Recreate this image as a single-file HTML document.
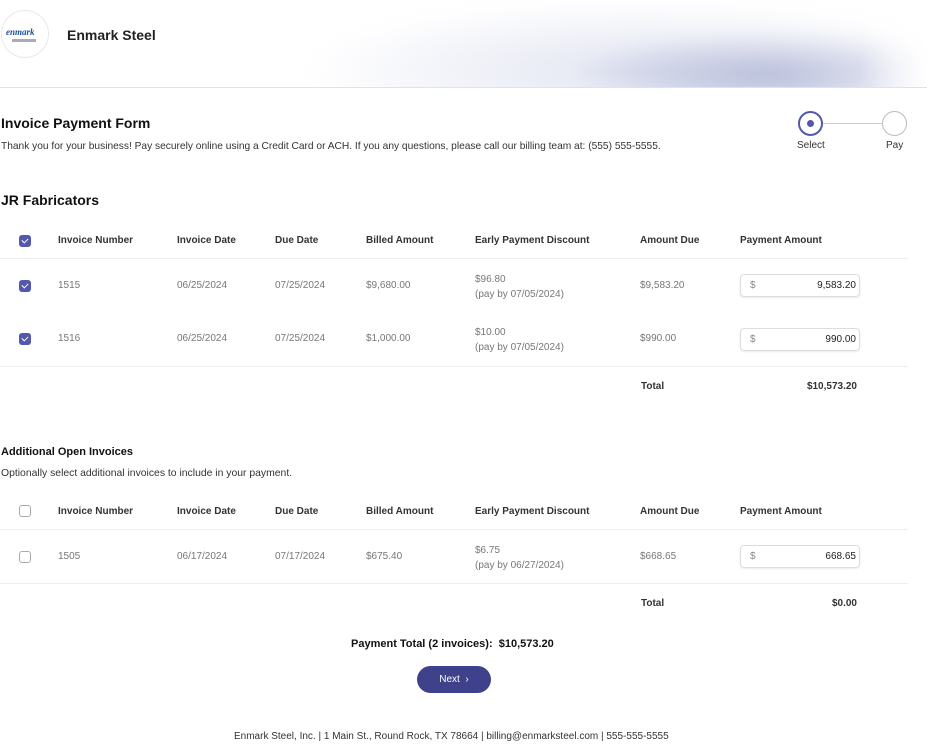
<!DOCTYPE html>
<html><head><meta charset="utf-8"><style>
*{margin:0;padding:0;box-sizing:border-box}
body{width:927px;height:756px;position:relative;background:#fff;font-family:"Liberation Sans",sans-serif;color:#222;overflow:hidden}
.a{position:absolute;white-space:nowrap}
.h{font-size:10px;font-weight:bold;color:#333;line-height:12px}
.c{font-size:10px;color:#777;line-height:12px}
.r{text-align:right}
.line{position:absolute;left:0;width:908px;height:1px;background:#eeeeee}
.cb{position:absolute;left:19px;width:12px;height:12px;border-radius:3px;background:#5358ad}
.cb:after{content:"";position:absolute;left:4px;top:2px;width:3px;height:5px;border:solid #fff;border-width:0 1.5px 1.5px 0;transform:rotate(45deg)}
.cbo{position:absolute;left:19px;width:12px;height:12px;border-radius:3px;border:1px solid #aaa;background:#fff}
.inp{position:absolute;left:740px;width:120px;height:23px;border:1px solid #ddd;border-radius:4px;box-shadow:0 1px 2px rgba(0,0,0,.08);font-size:10px;line-height:21px;color:#222}
.inp span{position:absolute;left:9px;color:#888}
.inp b{position:absolute;right:3px;font-weight:normal}
</style></head><body>
<div class="a" style="left:0;top:0;width:927px;height:88px;border-bottom:1px solid #e2e2e6;overflow:hidden">
<div style="position:absolute;left:280px;top:-30px;width:700px;height:160px;background:radial-gradient(ellipse 200px 45px at 490px 105px,rgba(150,158,200,.6),rgba(255,255,255,0) 100%),radial-gradient(ellipse 340px 70px at 360px 100px,rgba(190,196,225,.45),rgba(255,255,255,0) 100%);filter:blur(8px)"></div>
<div style="position:absolute;left:860px;top:0;width:70px;height:88px;background:linear-gradient(90deg,rgba(255,255,255,0),#fff)"></div>
</div>
<div class="a" style="left:1px;top:10px;width:48px;height:48px;border-radius:50%;border:1px solid #e8e8ec;background:#fff"></div>
<div class="a" style="left:6px;top:27px;font-size:9px;font-style:italic;font-weight:bold;color:#1b4f9c;font-family:'Liberation Serif',serif">enmark</div>
<div class="a" style="left:12px;top:39px;width:24px;height:3px;background:#aab"></div>
<div class="a" style="left:67px;top:27px;font-size:14px;font-weight:bold;color:#222">Enmark Steel</div>

<div class="a" style="left:1px;top:115px;font-size:14px;font-weight:bold;color:#111">Invoice Payment Form</div>
<div class="a" style="left:1px;top:141px;font-size:10.2px;color:#333">Thank you for your business! Pay securely online using a Credit Card or ACH. If you any questions, please call our billing team at: (555) 555-5555.</div>
<div class="a" style="left:798px;top:111px;width:25px;height:25px;border-radius:50%;border:2px solid #5358ad;background:#fff"></div>
<div class="a" style="left:807px;top:120px;width:7px;height:7px;border-radius:50%;background:#5358ad"></div>
<div class="a" style="left:823px;top:123px;width:59px;height:1px;background:#ccc"></div>
<div class="a" style="left:882px;top:111px;width:25px;height:25px;border-radius:50%;border:1px solid #bbb;background:#fff"></div>
<div class="a" style="left:797px;top:140px;font-size:10px;color:#333">Select</div>
<div class="a" style="left:886px;top:140px;font-size:10px;color:#333">Pay</div>

<div class="a" style="left:1px;top:192px;font-size:14px;font-weight:bold;color:#111">JR Fabricators</div>
<div class="cb" style="top:235px"></div>
<div class="a h" style="left:58px;top:235px">Invoice Number</div>
<div class="a h" style="left:177px;top:235px">Invoice Date</div>
<div class="a h" style="left:275px;top:235px">Due Date</div>
<div class="a h" style="left:366px;top:235px">Billed Amount</div>
<div class="a h" style="left:475px;top:235px">Early Payment Discount</div>
<div class="a h" style="left:640px;top:235px">Amount Due</div>
<div class="a h" style="left:740px;top:235px">Payment Amount</div>
<div class="line" style="top:258px"></div>

<div class="cb" style="top:280px"></div>
<div class="a c" style="left:58px;top:280px">1515</div>
<div class="a c" style="left:177px;top:280px">06/25/2024</div>
<div class="a c" style="left:275px;top:280px">07/25/2024</div>
<div class="a c" style="left:366px;top:280px">$9,680.00</div>
<div class="a c" style="left:475px;top:272px;line-height:15px">$96.80<br>(pay by 07/05/2024)</div>
<div class="a c" style="left:640px;top:280px">$9,583.20</div>
<div class="inp" style="top:274px"><span>$</span><b>9,583.20</b></div>

<div class="cb" style="top:333px"></div>
<div class="a c" style="left:58px;top:333px">1516</div>
<div class="a c" style="left:177px;top:333px">06/25/2024</div>
<div class="a c" style="left:275px;top:333px">07/25/2024</div>
<div class="a c" style="left:366px;top:333px">$1,000.00</div>
<div class="a c" style="left:475px;top:325px;line-height:15px">$10.00<br>(pay by 07/05/2024)</div>
<div class="a c" style="left:640px;top:333px">$990.00</div>
<div class="inp" style="top:328px"><span>$</span><b>990.00</b></div>
<div class="line" style="top:366px"></div>
<div class="a h" style="left:641px;top:381px">Total</div>
<div class="a h r" style="left:757px;width:100px;top:381px">$10,573.20</div>

<div class="a" style="left:1px;top:446px;font-size:11px;font-weight:bold;color:#111">Additional Open Invoices</div>
<div class="a" style="left:1px;top:468px;font-size:10.4px;color:#333">Optionally select additional invoices to include in your payment.</div>
<div class="cbo" style="top:505px"></div>
<div class="a h" style="left:58px;top:506px">Invoice Number</div>
<div class="a h" style="left:177px;top:506px">Invoice Date</div>
<div class="a h" style="left:275px;top:506px">Due Date</div>
<div class="a h" style="left:366px;top:506px">Billed Amount</div>
<div class="a h" style="left:475px;top:506px">Early Payment Discount</div>
<div class="a h" style="left:640px;top:506px">Amount Due</div>
<div class="a h" style="left:740px;top:506px">Payment Amount</div>
<div class="line" style="top:529px"></div>
<div class="cbo" style="top:551px"></div>
<div class="a c" style="left:58px;top:551px">1505</div>
<div class="a c" style="left:177px;top:551px">06/17/2024</div>
<div class="a c" style="left:275px;top:551px">07/17/2024</div>
<div class="a c" style="left:366px;top:551px">$675.40</div>
<div class="a c" style="left:475px;top:543px;line-height:15px">$6.75<br>(pay by 06/27/2024)</div>
<div class="a c" style="left:640px;top:551px">$668.65</div>
<div class="inp" style="top:545px"><span>$</span><b>668.65</b></div>
<div class="line" style="top:583px"></div>
<div class="a h" style="left:641px;top:598px">Total</div>
<div class="a h r" style="left:757px;width:100px;top:598px">$0.00</div>

<div class="a" style="left:351px;top:638px;font-size:11px;font-weight:bold;color:#111">Payment Total (2 invoices):&nbsp; $10,573.20</div>
<div class="a" style="left:417px;top:666px;width:74px;height:27px;border-radius:14px;background:#3f418a;color:#fff;font-size:10px;line-height:27px;text-align:center">Next &nbsp;&#8250;</div>
<div class="a" style="left:234px;top:731px;font-size:10px;color:#333">Enmark Steel, Inc. | 1 Main St., Round Rock, TX 78664 | billing@enmarksteel.com | 555-555-5555</div>
</body></html>
